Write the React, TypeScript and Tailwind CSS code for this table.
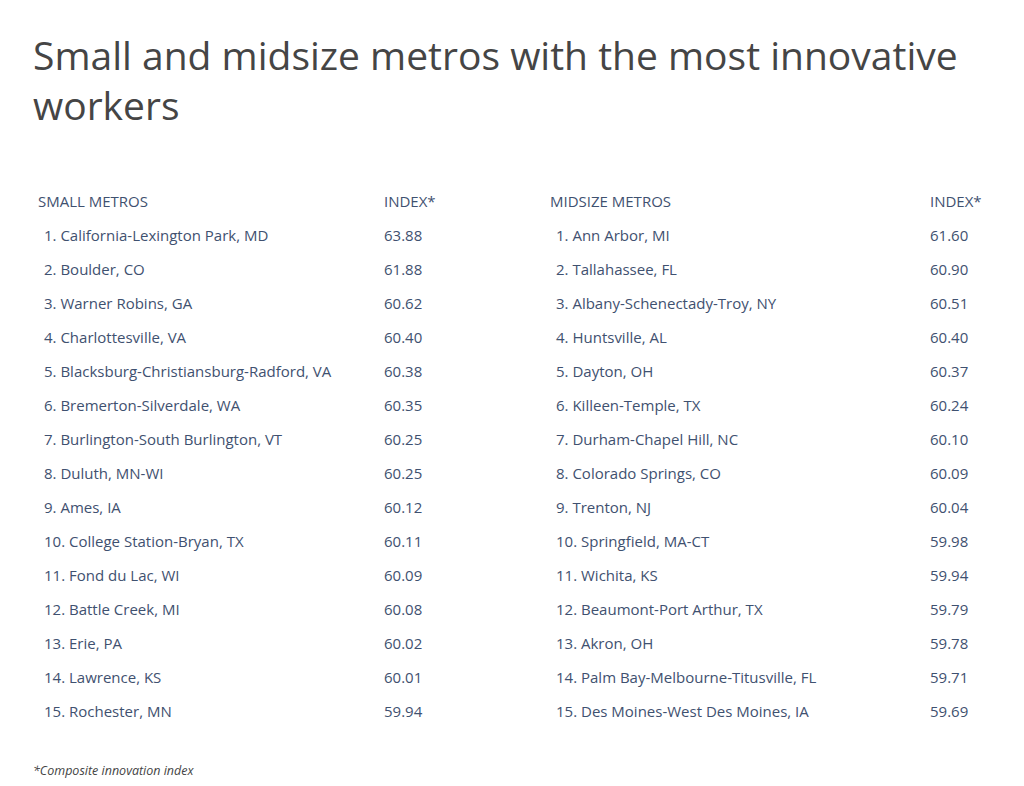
const small: [string, string][] = [
  ["California-Lexington Park, MD", "63.88"],
  ["Boulder, CO", "61.88"],
  ["Warner Robins, GA", "60.62"],
  ["Charlottesville, VA", "60.40"],
  ["Blacksburg-Christiansburg-Radford, VA", "60.38"],
  ["Bremerton-Silverdale, WA", "60.35"],
  ["Burlington-South Burlington, VT", "60.25"],
  ["Duluth, MN-WI", "60.25"],
  ["Ames, IA", "60.12"],
  ["College Station-Bryan, TX", "60.11"],
  ["Fond du Lac, WI", "60.09"],
  ["Battle Creek, MI", "60.08"],
  ["Erie, PA", "60.02"],
  ["Lawrence, KS", "60.01"],
  ["Rochester, MN", "59.94"],
];

const midsize: [string, string][] = [
  ["Ann Arbor, MI", "61.60"],
  ["Tallahassee, FL", "60.90"],
  ["Albany-Schenectady-Troy, NY", "60.51"],
  ["Huntsville, AL", "60.40"],
  ["Dayton, OH", "60.37"],
  ["Killeen-Temple, TX", "60.24"],
  ["Durham-Chapel Hill, NC", "60.10"],
  ["Colorado Springs, CO", "60.09"],
  ["Trenton, NJ", "60.04"],
  ["Springfield, MA-CT", "59.98"],
  ["Wichita, KS", "59.94"],
  ["Beaumont-Port Arthur, TX", "59.79"],
  ["Akron, OH", "59.78"],
  ["Palm Bay-Melbourne-Titusville, FL", "59.71"],
  ["Des Moines-West Des Moines, IA", "59.69"],
];

export default function App() {
  return (
    <div
      className="w-[1024px] h-[786px] bg-white overflow-hidden"
      style={{ fontFamily: '"Open Sans", "Liberation Sans", sans-serif' }}
    >
      <h1 className="pl-[33px] pt-[30px] pr-8 text-[39px] leading-[50px] text-[#454545]">
        Small and midsize metros with the most innovative workers
      </h1>

      <div className="mt-[54px] grid grid-cols-[346px_166px_380px_1fr] pl-[38px] text-[15px] text-[#3f5170]">
        <div className="h-[34px] flex items-center">SMALL METROS</div>
        <div className="h-[34px] flex items-center">INDEX*</div>
        <div className="h-[34px] flex items-center">MIDSIZE METROS</div>
        <div className="h-[34px] flex items-center">INDEX*</div>
        {small.map(([name, val], i) => (
          <Row key={i} n={i + 1} name={name} val={val} other={midsize[i]} />
        ))}
      </div>

      <p className="pl-[33px] mt-[34px] text-[12.5px] italic text-[#444]">*Composite innovation index</p>
    </div>
  );
}

function Row({ n, name, val, other }: { n: number; name: string; val: string; other: [string, string] }) {
  return (
    <>
      <div className="h-[34px] flex items-center pl-[6px]">
        {n}. {name}
      </div>
      <div className="h-[34px] flex items-center">{val}</div>
      <div className="h-[34px] flex items-center pl-[6px]">
        {n}. {other[0]}
      </div>
      <div className="h-[34px] flex items-center">{other[1]}</div>
    </>
  );
}
